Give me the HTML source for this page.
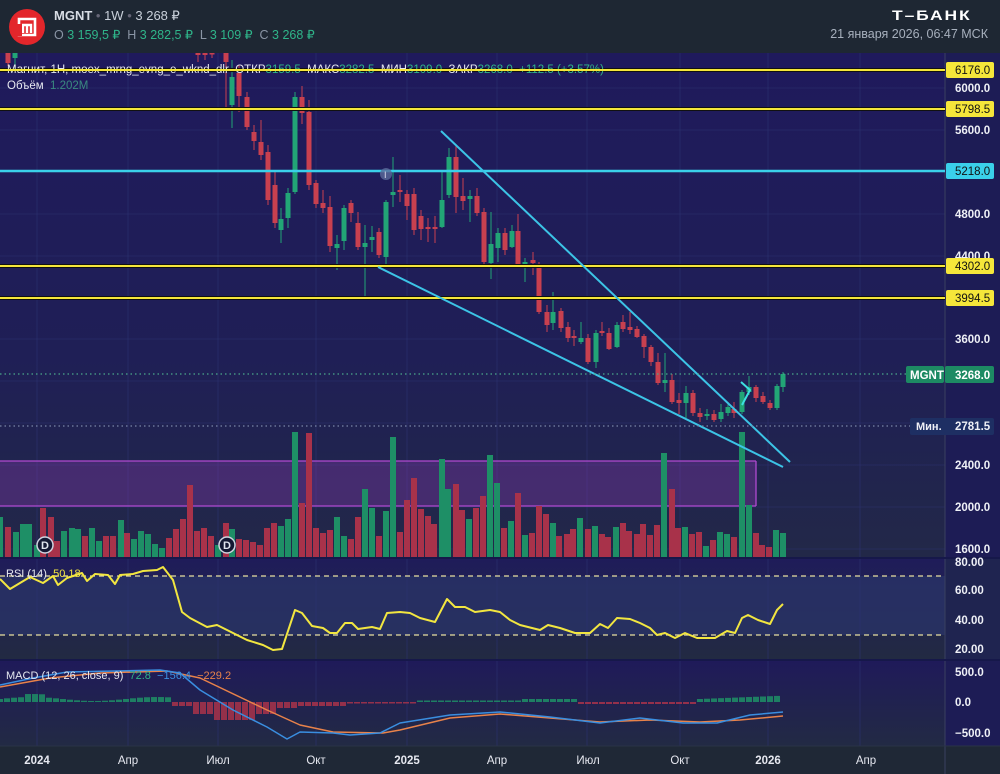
<!DOCTYPE html>
<html><head><meta charset="utf-8">
<style>
html,body{margin:0;padding:0;width:1000px;height:774px;overflow:hidden;background:#1e2633;font-family:"Liberation Sans",sans-serif}
#hdr{position:absolute;left:0;top:0;width:1000px;height:53px;background:#1e2733}
.t{position:absolute;white-space:nowrap}
svg text{font-family:"Liberation Sans",sans-serif}
</style></head><body>
<div id="hdr">
 <svg style="position:absolute;left:8px;top:8px" width="38" height="38" viewBox="0 0 38 38">
  <circle cx="19" cy="19" r="18" fill="#e3262b"/>
  <path d="M11 11 H27 V27 H11 Z" fill="none" stroke="#fff" stroke-width="2.6"/>
  <path d="M15 25 V17 H23 V25 M19 17 V25" fill="none" stroke="#fff" stroke-width="2.4"/>
  <rect x="9" y="16" width="5" height="12" fill="#e3262b"/>
 </svg>
 <div class="t" style="left:54px;top:8px;font-size:13px;color:#c9d0da"><b style="color:#d8dde5">MGNT</b> <span style="color:#667">•</span> 1W <span style="color:#667">•</span> 3 268 ₽</div>
 <div class="t" style="left:54px;top:27px;font-size:12.5px;color:#8a95a5">O <span style="color:#2fb58a">3 159,5 ₽</span>&nbsp; H <span style="color:#2fb58a">3 282,5 ₽</span>&nbsp; L <span style="color:#2fb58a">3 109 ₽</span>&nbsp; C <span style="color:#2fb58a">3 268 ₽</span></div>
 <div class="t" style="left:892px;top:7px;font-size:14px;font-weight:bold;color:#fff;letter-spacing:1.5px;transform:scaleX(1.25);transform-origin:left">Т–БАНК</div>
 <div class="t" style="right:12px;top:27px;font-size:12.5px;color:#a7b0bd">21 января 2026, 06:47 МСК</div>
</div>
<svg id="c" style="position:absolute;left:0;top:53px" width="1000" height="721" viewBox="0 53 1000 721"></svg>
<script>
var S='';
function r(x,y,w,h,f,ex){S+='<rect x="'+x+'" y="'+y+'" width="'+w+'" height="'+h+'" fill="'+f+'" '+(ex||'')+'/>';}
function l(x1,y1,x2,y2,c,w,ex){S+='<line x1="'+x1+'" y1="'+y1+'" x2="'+x2+'" y2="'+y2+'" stroke="'+c+'" stroke-width="'+w+'" '+(ex||'')+'/>';}
function t(x,y,s,c,sz,ex){S+='<text x="'+x+'" y="'+y+'" fill="'+c+'" font-size="'+(sz||12)+'" '+(ex||'')+'>'+s+'</text>';}
function pl(pts,c,w){S+='<polyline points="'+pts.map(function(p){return p.join(',')}).join(' ')+'" fill="none" stroke="'+c+'" stroke-width="'+w+'" stroke-linejoin="round"/>';}
S+='<defs><linearGradient id="gm" x1="0" y1="0" x2="0" y2="1"><stop offset="0" stop-color="#1f1a5c"/><stop offset="0.6" stop-color="#1f1f56"/><stop offset="1" stop-color="#222848"/></linearGradient>'+
'<linearGradient id="gr" x1="0" y1="0" x2="0" y2="1"><stop offset="0" stop-color="#1f1c5a"/><stop offset="1" stop-color="#222a42"/></linearGradient>'+
'<linearGradient id="gd" x1="0" y1="0" x2="0" y2="1"><stop offset="0" stop-color="#1f1a5a"/><stop offset="1" stop-color="#222a44"/></linearGradient></defs>';
r(0,53,945,505,'url(#gm)');
r(0,558,945,102,'url(#gr)');
r(0,576,945,59,'#2a3468','opacity="0.75"');
r(0,660,945,86,'url(#gd)');
r(945,53,55,693,'#1d1c55');
r(945,558,55,102,'#1f2450');
r(0,746,1000,28,'#1f2836');
var gx=[37,128,218,316,407,497,587,680,768,860];
gx.forEach(function(x){l(x,53,x,746,'#2c3270',1,'opacity="0.6"');});
[88,130,172,214,256,298,339,381,423,465,507,549].forEach(function(y){l(0,y,945,y,'#2c3270',1,'opacity="0.5"');});
l(945,53,945,774,'#3a4060',1);
l(0,558,1000,558,'#16184a',2);l(0,660,1000,660,'#16184a',2);l(0,746,1000,746,'#2a3347',1);
r(0,461,756,45,'#8a3ab0','opacity="0.35"');
l(0,461,756,461,'#b04ad0',1.3);l(0,506,756,506,'#b04ad0',1.3);l(756,461,756,506,'#b04ad0',1.3);
var G='#1e8f66',R='#a8324a';
var vol=[[0,517,'g'],[8,527,'r'],[16,532,'g'],[23,524,'g'],[29,524,'g'],[37,545,'g'],[43,508,'r'],[51,517,'r'],[57,541,'r'],[64,531,'g'],[72,528,'g'],[78,529,'g'],[85,536,'r'],[92,528,'g'],[99,541,'g'],[106,536,'r'],[113,536,'r'],[121,520,'g'],[127,533,'r'],[134,539,'g'],[141,531,'g'],[148,534,'g'],[155,544,'g'],[162,548,'g'],[169,538,'r'],[176,529,'r'],[183,519,'r'],[190,485,'r'],[197,531,'r'],[204,528,'r'],[211,536,'r'],[218,545,'g'],[226,523,'r'],[232,529,'g'],[239,539,'r'],[246,540,'r'],[253,542,'r'],[260,545,'r'],[267,528,'r'],[274,523,'r'],[281,526,'g'],[288,519,'g'],[295,432,'g'],[302,503,'r'],[309,433,'r'],[316,528,'r'],[323,533,'r'],[330,530,'r'],[337,517,'g'],[344,536,'g'],[351,539,'r'],[358,517,'r'],[365,489,'g'],[372,508,'g'],[379,536,'r'],[386,511,'g'],[393,437,'g'],[400,532,'r'],[407,500,'r'],[414,478,'r'],[421,509,'r'],[428,516,'r'],[434,524,'r'],[442,459,'g'],[448,489,'g'],[456,484,'r'],[462,510,'r'],[469,519,'g'],[476,508,'r'],[483,496,'r'],[490,455,'g'],[497,483,'g'],[504,528,'r'],[511,521,'g'],[518,493,'r'],[525,535,'g'],[532,533,'r'],[539,506,'r'],[546,514,'r'],[553,523,'g'],[559,536,'r'],[567,534,'r'],[573,529,'r'],[580,518,'g'],[588,529,'r'],[595,526,'g'],[602,534,'r'],[608,537,'r'],[616,527,'g'],[623,523,'r'],[629,531,'r'],[637,534,'r'],[643,524,'r'],[650,535,'r'],[657,525,'r'],[664,453,'g'],[672,489,'r'],[678,528,'r'],[685,527,'g'],[692,534,'r'],[699,532,'r'],[706,546,'g'],[713,540,'r'],[720,532,'g'],[727,534,'g'],[734,537,'r'],[742,432,'g'],[749,505,'g'],[756,533,'r'],[762,545,'r'],[769,547,'r'],[776,530,'g'],[783,533,'g']];
vol.forEach(function(v){r(v[0]-3,v[1],6,557-v[1],v[2]=='g'?G:R);});
[[45,545],[227,545]].forEach(function(p){S+='<circle cx="'+p[0]+'" cy="'+p[1]+'" r="8" fill="#141833" stroke="#d0d4e0" stroke-width="1.5"/>';t(p[0]-4,p[1]+4,'D','#e0e4ee',11,'font-weight="bold"');});
var CG='#22a576',CR='#c8404f';
var cd=[[8,53,63,'r',53,66],[15,53,58,'g',53,72],[198,53,55,'r',53,62],[205,53,55,'r',53,60],[212,53,54,'r',53,58],[226,53,62,'r',53,107],[232,77,105,'g',60,128],[239,73,96,'r',65,112],[247,97,127,'r',92,130],[254,132,141,'r',125,150],[261,142,155,'r',120,160],[268,152,200,'r',145,205],[275,185,223,'r',172,228],[281,219,230,'g',208,243],[288,193,218,'g',188,228],[295,97,192,'g',92,194],[302,97,113,'r',86,124],[309,112,185,'r',100,190],[316,183,204,'r',180,208],[323,203,208,'r',190,213],[330,207,246,'r',196,252],[337,244,248,'g',235,270],[344,208,241,'g',205,250],[351,203,213,'r',200,222],[358,223,247,'r',212,250],[365,243,247,'g',225,297],[372,237,240,'g',226,252],[379,232,255,'r',228,258],[386,202,257,'g',200,268],[393,192,195,'g',157,207],[400,190,192,'r',175,202],[407,194,206,'r',190,220],[414,194,230,'r',188,235],[421,216,229,'r',210,240],[428,227,229,'r',218,242],[435,227,229,'r',216,243],[442,200,227,'g',170,228],[449,157,195,'g',148,198],[456,157,197,'r',145,213],[463,196,201,'r',178,210],[470,196,199,'g',190,222],[477,196,213,'r',188,216],[484,212,262,'r',208,265],[491,244,263,'g',212,279],[498,233,248,'g',228,262],[505,233,250,'r',228,255],[512,231,247,'g',225,248],[518,231,265,'r',214,265],[525,262,265,'g',258,282],[533,260,263,'r',252,275],[539,264,312,'r',262,314],[547,312,325,'r',305,332],[553,312,323,'g',292,330],[561,311,328,'r',308,332],[568,327,338,'r',322,342],[574,336,338,'r',330,346],[581,338,342,'g',322,344],[588,338,362,'r',334,364],[596,333,362,'g',330,368],[602,331,333,'r',322,336],[609,333,349,'r',328,350],[617,325,347,'g',322,348],[623,322,329,'r',315,332],[630,327,330,'r',312,334],[637,329,337,'r',326,338],[644,336,347,'r',334,358],[651,347,362,'r',345,366],[658,362,383,'r',353,385],[665,380,383,'g',353,392],[672,380,402,'r',374,404],[679,400,403,'r',393,414],[686,393,403,'g',386,418],[693,393,413,'r',390,416],[700,413,417,'r',408,422],[707,414,416,'g',409,420],[714,414,420,'r',410,422],[721,412,419,'g',404,422],[728,407,413,'g',402,416],[734,409,413,'r',402,418],[742,392,412,'g',390,414],[749,387,392,'g',376,395],[756,387,398,'r',385,402],[763,396,402,'r',392,404],[770,403,408,'r',400,410],[777,386,408,'g',384,410],[783,374,387,'g',372,392]];
cd.forEach(function(c){var col=c[3]=='g'?CG:CR;l(c[0],c[4],c[0],c[5],col,1);r(c[0]-2.5,c[1],5,Math.max(1.5,c[2]-c[1]),col);});
[70,109,266,298].forEach(function(y){l(0,y,945,y,'#111',4);l(0,y,945,y,'#f5e63a',2);});
l(0,171,945,171,'#3ad0ea',2.5);
l(441,131,790,462,'#3cc4e6',2);l(378,267,783,467,'#3cc4e6',2);
pl([[741,382],[750,390],[742,405]],'#3de0e0',2);
S+='<circle cx="386" cy="174" r="6" fill="#5a6a9a" opacity="0.8"/>';t(384,178,'I','#dde',9);
l(0,374,945,374,'#4aa88a',1.2,'stroke-dasharray="1.5 3"');
l(0,426,945,426,'#7a86a8',1.2,'stroke-dasharray="1.5 3"');
t(7,73,'Магнит, 1Н, moex_mrng_evng_e_wknd_dlr&#160; ОТКР<tspan fill="#2fb58a">3159.5</tspan>&#160; МАКС<tspan fill="#2fb58a">3282.5</tspan>&#160; МИН<tspan fill="#2fb58a">3109.0</tspan>&#160; ЗАКР<tspan fill="#2fb58a">3268.0</tspan>&#160; <tspan fill="#2fb58a">+112.5 (+3.57%)</tspan>','#e6e8f0',11.5);
l(0,70,945,70,'#f5e63a',2);
t(7,89,'Объём&#160;&#160;<tspan fill="#3a8a80">1.202M</tspan>','#e6e8f0',11.5);
[[88,'6000.0'],[130,'5600.0'],[214,'4800.0'],[256,'4400.0'],[339,'3600.0'],[465,'2400.0'],[507,'2000.0'],[549,'1600.0']].forEach(function(a){t(955,a[0]+4,a[1],'#eef0f6',11.5,'font-weight="bold"');});
[[70,'6176.0'],[109,'5798.5'],[266,'4302.0'],[298,'3994.5']].forEach(function(a){r(946,a[0]-8,48,16,'#f5e63a','rx="2"');t(955,a[0]+4,a[1],'#111',11.5);});
r(946,163,48,16,'#3ad0ea','rx="2"');t(955,175,'5218.0','#111',11.5);
r(906,366,38,17,'#1d8a63','rx="2"');t(910,379,'MGNT','#fff',11.5,'font-weight="bold"');
r(945,366,49,17,'#1d8a63','rx="2"');t(955,379,'3268.0','#fff',11.5,'font-weight="bold"');
r(910,418,84,17,'#1e2f63','rx="2"');t(916,430,'Мин.','#eef0f6',11,'font-weight="bold"');t(955,430,'2781.5','#eef0f6',11.5,'font-weight="bold"');
l(0,576,945,576,'#e8e0a0',1.2,'stroke-dasharray="5 4"');l(0,635,945,635,'#e8e0a0',1.2,'stroke-dasharray="5 4"');
pl([[0,579],[10,589],[30,577],[43,583],[53,576],[58,585],[67,578],[82,573],[87,581],[95,574],[108,575],[115,584],[120,575],[133,574],[143,571],[157,570],[163,567],[173,580],[182,612],[190,618],[207,627],[217,625],[233,633],[247,640],[263,645],[273,650],[282,649],[295,610],[302,613],[312,626],[323,628],[330,633],[337,633],[345,623],[352,623],[358,629],[372,627],[380,629],[387,613],[400,612],[410,613],[420,618],[435,622],[447,599],[455,607],[465,607],[475,612],[490,610],[500,612],[510,620],[520,625],[540,630],[548,625],[560,628],[575,633],[590,633],[600,624],[608,628],[617,618],[630,619],[640,623],[650,628],[657,635],[665,633],[675,638],[685,633],[697,638],[715,638],[727,631],[735,633],[742,618],[748,615],[758,620],[770,624],[777,610],[783,604]],'#f2e640',2);
t(6,577,'RSI (14)&#160; <tspan fill="#f2e640">50.18</tspan>','#e6e8f0',11);
[[562,'80.00'],[590,'60.00'],[620,'40.00'],[649,'20.00']].forEach(function(a){t(955,a[0]+4,a[1],'#eef0f6',11.5,'font-weight="bold"');});
for(var x=0;x<=783;x+=7){var h;
 if(x<175)h=3+2*Math.sin(x/20)+ (x>25&&x<45?3:0);
 else if(x<300)h=-(x<190?4:x<215?12:x<255?18:x<275?12:6);
 else if(x<350)h=-4;else if(x<520)h=(x<420?-1.5:1.5);else if(x<580)h=3;else if(x<700)h=-2;else h=3+(x-700)/25;
 var col=h>0?'#1e8f66':'#a8324a';
 if(h>0)r(x-3,702-h,6,h,col,'opacity="0.85"');else r(x-3,702,6,-h,col,'opacity="0.85"');}
pl([[0,687],[50,678],[100,673],[167,671],[200,678],[267,710],[300,725],[333,732],[383,733],[400,730],[450,718],[500,714],[550,718],[600,722],[650,720],[700,722],[740,720],[783,716]],'#e8824a',1.5);
pl([[0,685],[33,678],[67,672],[160,670],[180,673],[200,690],[233,710],[267,727],[287,739],[300,732],[333,733],[350,735],[380,733],[400,723],[450,715],[500,712],[550,717],[600,723],[640,718],[683,723],[717,723],[750,715],[783,712]],'#3a8ee0',1.5);
t(6,679,'MACD (12, 26, close, 9)&#160; <tspan fill="#2fb58a">72.8</tspan>&#160; <tspan fill="#3a8ee0">−156.4</tspan>&#160; <tspan fill="#e8824a">−229.2</tspan>','#e6e8f0',11);
[[672,'500.0'],[702,'0.0'],[733,'−500.0']].forEach(function(a){t(955,a[0]+4,a[1],'#eef0f6',11.5,'font-weight="bold"');});
[[37,'2024',1],[128,'Апр'],[218,'Июл'],[316,'Окт'],[407,'2025',1],[497,'Апр'],[588,'Июл'],[680,'Окт'],[768,'2026',1],[866,'Апр']].forEach(function(a){t(a[0],764,a[1],'#e6e8f0',11.5,'text-anchor="middle"'+(a[2]?' font-weight="bold"':''));});
document.getElementById('c').innerHTML=S;
</script>
</body></html>
